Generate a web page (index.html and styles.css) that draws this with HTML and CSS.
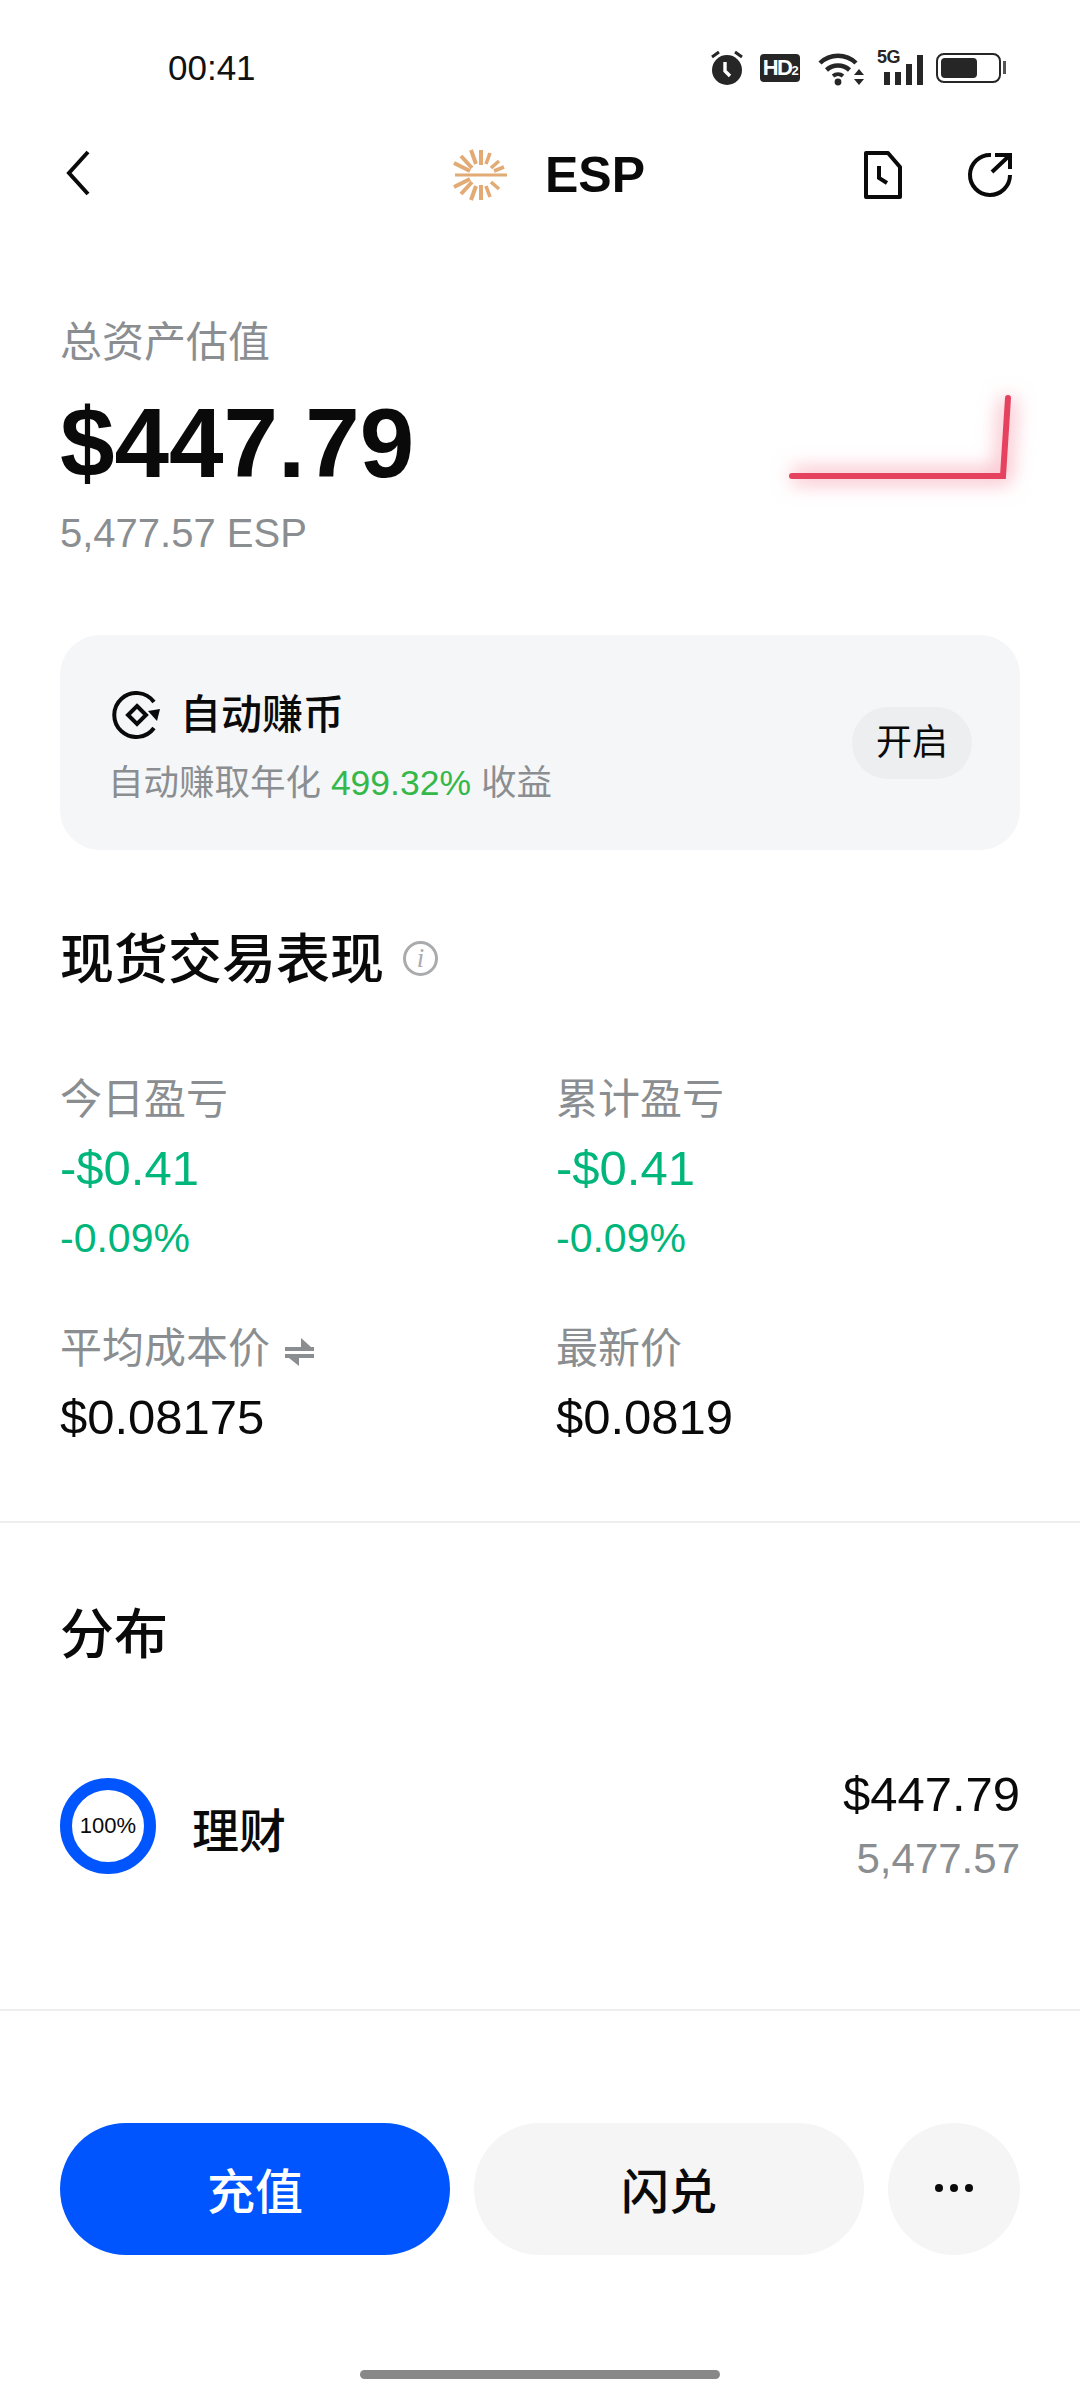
FILE: index.html
```html
<!DOCTYPE html>
<html lang="zh-CN">
<head>
    <meta charset="UTF-8">
    <meta name="viewport" content="width=device-width, initial-scale=1.0">
    <title>ESP</title>
    <link rel="stylesheet" href="styles.css">
</head>
<body>

<div class="page">
    <!-- Status bar -->
    <div class="statusbar">
        <span class="time">00:41</span>
        <div class="status-icons">
            <svg width="36" height="36" viewBox="0 0 36 36">
                <circle cx="18" cy="20" r="15" fill="#262626"/>
                <path d="M3 7l7-5M33 7l-7-5" stroke="#262626" stroke-width="3" fill="none"/>
                <path d="M16 12v9l5 5" stroke="#fff" stroke-width="3.4" fill="none"/>
            </svg>
            <span class="hd-badge">HD<small>2</small></span>
            <svg width="46" height="36" viewBox="0 0 46 36">
                <path d="M2 13a26 26 0 0 1 36 0" stroke="#262626" stroke-width="4.5" fill="none"/>
                <path d="M8.5 20a17 17 0 0 1 23 0" stroke="#262626" stroke-width="4.5" fill="none"/>
                <path d="M15 26a8 8 0 0 1 10 0" stroke="#262626" stroke-width="4" fill="none"/>
                <circle cx="20" cy="32" r="3.4" fill="#262626"/>
                <path d="M36 25l5-6 5 6zM36 29h10l-5 6z" fill="#262626"/>
            </svg>
            <div class="signal">
                <span class="signal-label">5G</span>
                <div class="signal-bars">
                    <i class="bar-1"></i><i class="bar-2"></i><i class="bar-3"></i><i class="bar-4"></i>
                </div>
            </div>
            <div class="battery"><div class="battery-fill"></div></div>
        </div>
    </div>

    <!-- Top nav -->
    <div class="nav">
        <svg class="back" width="24" height="46" viewBox="0 0 24 46">
            <path d="M22 2L3 23l19 21" stroke="#0a0a0a" stroke-width="4" fill="none"/>
        </svg>
        <div class="nav-title">
            <svg class="coin" width="60" height="60" viewBox="0 0 60 60" stroke="#e2aa74" stroke-linecap="butt">
                <path d="M4 30h52" stroke-width="2.8"/>
                <path d="M30 20V5M30 40v15" stroke-width="4"/>
                <path d="M25 19L20 5M25 41L20 55" stroke-width="4"/>
                <path d="M21 23L10 11M21 37L10 49" stroke-width="4"/>
                <path d="M19 26L3 18M19 34L3 42" stroke-width="4"/>
                <path d="M35 19l4-11M35 41l4 11" stroke-width="3.6"/>
                <path d="M40 23l8-7M40 37l8 7" stroke-width="3.6"/>
                <path d="M43 26l10-4" stroke-width="3.6"/>
            </svg>
            <span class="symbol">ESP</span>
        </div>
        <div class="nav-actions">
            <svg width="40" height="48" viewBox="0 0 40 48">
                <path d="M3 2h22l12 14v30H3z" stroke="#0a0a0a" stroke-width="4" fill="none" stroke-linejoin="round"/>
                <path d="M16 15v12l8 5" stroke="#0a0a0a" stroke-width="4" fill="none"/>
            </svg>
            <svg width="46" height="46" viewBox="0 0 46 46">
                <path d="M24 3A20 20 0 1 0 43 23" stroke="#0a0a0a" stroke-width="4" fill="none"/>
                <path d="M28 3h15v14M43 3L25 20" stroke="#0a0a0a" stroke-width="4" fill="none"/>
            </svg>
        </div>
    </div>

    <!-- Asset summary -->
    <div class="summary">
        <div>
            <div class="muted-label">总资产估值</div>
            <div class="total">$447.79</div>
            <div class="total-sub">5,477.57 ESP</div>
        </div>
        <svg class="spark" width="230" height="110" viewBox="0 0 230 110">
            <defs>
                <filter id="glow" x="-20%" y="-40%" width="140%" height="180%">
                    <feGaussianBlur stdDeviation="10"/>
                </filter>
            </defs>
            <path d="M12 82H223L228 4" stroke="#f8b4c0" stroke-width="14" fill="none" filter="url(#glow)"/>
            <path d="M12 82H223L228 4" stroke="#e6425f" stroke-width="6" fill="none" stroke-linecap="round"/>
        </svg>
    </div>

    <!-- Auto earn card -->
    <div class="earn-card">
        <div class="earn-text">
            <div class="earn-title">
                <svg width="50" height="48" viewBox="0 0 50 48">
                    <path d="M42 37A22 22 0 1 1 42 11" stroke="#0a0a0a" stroke-width="4" fill="none"/>
                    <path d="M36 20l12-2-3 12z" fill="#0a0a0a"/>
                    <path d="M25 15l9 9-9 9-9-9z" stroke="#0a0a0a" stroke-width="4" fill="none"/>
                </svg>
                <span>自动赚币</span>
            </div>
            <div class="earn-sub">自动赚取年化 <span class="earn-rate">499.32%</span> 收益</div>
        </div>
        <div class="earn-btn">开启</div>
    </div>

    <!-- Spot performance -->
    <div class="section-head">
        <span>现货交易表现</span>
        <span class="info-icon">i</span>
    </div>
    <div class="stats">
        <div class="stat">
            <div class="stat-label">今日盈亏</div>
            <div class="stat-value down">-$0.41</div>
            <div class="stat-pct down">-0.09%</div>
        </div>
        <div class="stat">
            <div class="stat-label">累计盈亏</div>
            <div class="stat-value down">-$0.41</div>
            <div class="stat-pct down">-0.09%</div>
        </div>
        <div class="stat">
            <div class="stat-label">平均成本价
                <svg class="swap" width="30" height="28" viewBox="0 0 30 28">
                    <path d="M0 9h29v4H0zM16 0l10 9H16zM0 16h29v4H0zM14 28L4 20h10z" fill="#8b8e91"/>
                </svg>
            </div>
            <div class="stat-value">$0.08175</div>
        </div>
        <div class="stat">
            <div class="stat-label">最新价</div>
            <div class="stat-value">$0.0819</div>
        </div>
    </div>

    <div class="divider divider-top"></div>

    <!-- Distribution -->
    <div class="section-head dist-head">分布</div>
    <div class="dist-row">
        <div class="dist-left">
            <div class="ring">100%</div>
            <span class="dist-name">理财</span>
        </div>
        <div class="dist-right">
            <div class="dist-value">$447.79</div>
            <div class="dist-amount">5,477.57</div>
        </div>
    </div>

    <div class="divider divider-bottom"></div>

    <!-- Bottom actions -->
    <div class="actions">
        <div class="btn btn-primary">充值</div>
        <div class="btn btn-light">闪兑</div>
        <div class="btn btn-more"><i></i><i></i><i></i></div>
    </div>

    <div class="home-bar"></div>
</div>

</body>
</html>
```

FILE: styles.css
```css
* {
    box-sizing: border-box;
}
body {
    margin: 0;
    background: #fff;
    color: #0a0a0a;
    font-family: "Liberation Sans", "Noto Sans CJK SC", sans-serif;
}
.page {
    width: 1080px;
    height: 2400px;
    overflow: hidden;
}

/* status bar */
.statusbar {
    height: 136px;
    display: flex;
    justify-content: space-between;
    align-items: center;
    padding: 0 79px 0 168px;
}
.time {
    font-size: 35px;
    color: #111;
}
.status-icons {
    display: flex;
    align-items: center;
}
.hd-badge {
    width: 40px;
    height: 28px;
    margin-left: 15px;
    background: #262626;
    border-radius: 4px;
    color: #fff;
    font-size: 22px;
    font-weight: 700;
    line-height: 28px;
    text-align: center;
    letter-spacing: -1.5px;
}
.hd-badge small {
    font-size: 13px;
}
.status-icons svg:nth-child(3) {
    margin-left: 18px;
}
.signal {
    position: relative;
    width: 46px;
    height: 34px;
    margin-left: 13px;
}
.signal-label {
    position: absolute;
    left: 0;
    top: -3px;
    font-size: 18px;
    font-weight: 700;
    line-height: 18px;
    color: #262626;
    letter-spacing: -0.5px;
}
.signal-bars {
    position: absolute;
    right: 0;
    bottom: 0;
    display: flex;
    align-items: flex-end;
    gap: 5px;
}
.signal-bars i {
    display: block;
    width: 6px;
    background: #262626;
}
.bar-1 { height: 13px; }
.bar-2 { height: 13px; }
.bar-3 { height: 21px; }
.bar-4 { height: 30px; }
.battery {
    position: relative;
    width: 65px;
    height: 30px;
    margin-left: 13px;
    border: 2.5px solid #262626;
    border-radius: 8px;
    padding: 3px;
}
.battery::after {
    content: "";
    position: absolute;
    right: -7px;
    top: 6px;
    width: 3px;
    height: 13px;
    background: #555;
}
.battery-fill {
    width: 36px;
    height: 100%;
    background: #262626;
    border-radius: 4px;
}

/* nav */
.nav {
    height: 74px;
    position: relative;
    display: flex;
    justify-content: space-between;
    align-items: center;
    padding: 0 67px 0 66px;
}
.nav-title {
    position: absolute;
    left: 451px;
    top: 9px;
    display: flex;
    align-items: center;
}
.symbol {
    margin-left: 34px;
    font-size: 50px;
    font-weight: 700;
    line-height: 60px;
}
.nav-actions {
    display: flex;
    align-items: center;
    gap: 64px;
    padding-top: 4px;
}

/* summary */
.summary {
    display: flex;
    justify-content: space-between;
    align-items: flex-end;
    padding: 103px 70px 0 60px;
}
.muted-label {
    color: #8b8e91;
    font-size: 42px;
    line-height: 60px;
}
.total {
    margin-top: 15px;
    font-size: 98px;
    font-weight: 700;
    line-height: 110px;
}
.total-sub {
    margin-top: 10px;
    color: #8b8e91;
    font-size: 40px;
    line-height: 50px;
}
.spark {
    margin-bottom: 54px;
    overflow: visible;
}

/* earn card */
.earn-card {
    height: 215px;
    margin: 77px 60px 0;
    padding: 0 48px;
    display: flex;
    justify-content: space-between;
    align-items: center;
    background: #f5f6f8;
    border-radius: 40px;
}
.earn-text {
    padding-top: 9px;
}
.earn-title {
    display: flex;
    align-items: center;
    gap: 18px;
    font-size: 41px;
    font-weight: 500;
    line-height: 56px;
}
.earn-title svg {
    margin-left: 4px;
}
.earn-sub {
    margin-top: 15px;
    color: #8b8e91;
    font-size: 35.5px;
    line-height: 50px;
}
.earn-rate {
    color: #34b84a;
}
.earn-btn {
    width: 120px;
    height: 72px;
    background: #edeef0;
    border-radius: 36px;
    font-size: 36px;
    line-height: 72px;
    text-align: center;
}

/* sections */
.section-head {
    margin: 75px 60px 0;
    display: flex;
    align-items: center;
    font-size: 54px;
    font-weight: 500;
    line-height: 70px;
}
.info-icon {
    width: 35px;
    height: 35px;
    margin-left: 19px;
    margin-top: -4px;
    border: 3px solid #a9abad;
    border-radius: 50%;
    color: #a9abad;
    font-family: "Liberation Serif", serif;
    font-size: 27px;
    font-style: italic;
    font-weight: 400;
    line-height: 28px;
    text-align: center;
}
.stats {
    margin: 77px 60px 0;
    display: grid;
    grid-template-columns: 496px 1fr;
    row-gap: 58px;
}
.stat-label {
    color: #8b8e91;
    font-size: 42px;
    line-height: 56px;
}
.swap {
    margin-left: 3px;
    vertical-align: -3px;
}
.stat-value {
    margin-top: 10px;
    font-size: 49px;
    line-height: 60px;
}
.stat-pct {
    margin-top: 15px;
    font-size: 41px;
    line-height: 50px;
}
.down {
    color: #00b67a;
}
.divider {
    height: 2px;
    background: #eeeeee;
}
.divider-top {
    margin-top: 74px;
}
.dist-head {
    margin-top: 77px;
}
.dist-row {
    height: 130px;
    margin: 91px 60px 0;
    display: flex;
    justify-content: space-between;
    align-items: center;
}
.dist-left {
    display: flex;
    align-items: center;
}
.ring {
    width: 96px;
    height: 96px;
    border: 12px solid #0055ff;
    border-radius: 50%;
    font-size: 22px;
    line-height: 72px;
    text-align: center;
}
.dist-name {
    margin-left: 36px;
    margin-top: 2px;
    font-size: 47px;
    font-weight: 500;
}
.dist-right {
    text-align: right;
}
.dist-value {
    font-size: 49px;
    line-height: 60px;
}
.dist-amount {
    margin-top: 5px;
    color: #8b8e91;
    font-size: 42px;
    line-height: 60px;
}
.divider-bottom {
    margin-top: 118px;
}

/* bottom actions */
.actions {
    margin: 112px 60px 0;
    display: flex;
    gap: 24px;
}
.btn {
    height: 132px;
    border-radius: 66px;
    display: flex;
    justify-content: center;
    align-items: center;
    padding-bottom: 2px;
    font-size: 48px;
    font-weight: 500;
}
.btn-primary {
    width: 390px;
    background: #0055ff;
    color: #fff;
}
.btn-light {
    width: 390px;
    background: #f5f5f5;
}
.btn-more {
    width: 132px;
    background: #f5f5f5;
    gap: 7px;
}
.btn-more i {
    width: 8px;
    height: 8px;
    background: #0a0a0a;
    border-radius: 50%;
}
.home-bar {
    width: 360px;
    height: 9px;
    margin: 115px auto 0;
    background: #888;
    border-radius: 5px;
}
```
